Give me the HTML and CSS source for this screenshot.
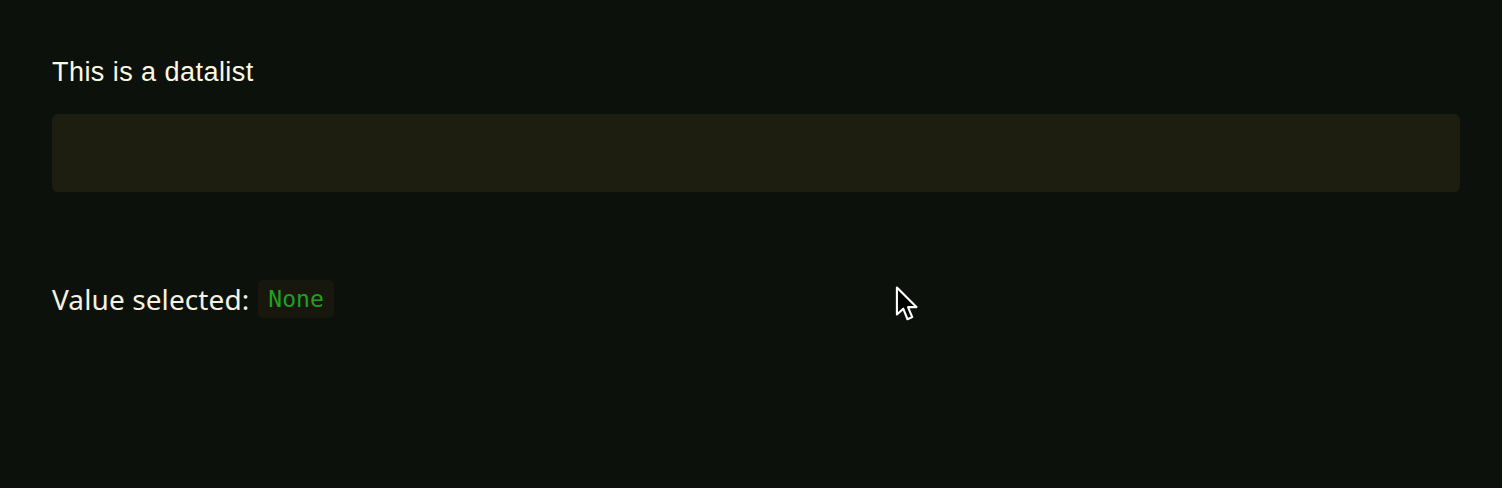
FILE: index.html
```html
<!DOCTYPE html>
<html>
<head>
<meta charset="utf-8">
<link rel="stylesheet" href="styles.css">
</head>
<body>
<main class="page">
  <label class="label" for="dl">This is a datalist</label>
  <input class="field" id="dl" list="opts">
  <datalist id="opts"></datalist>
  <p class="result">Value selected: <code class="code">None</code></p>
</main>
<svg class="cursor" width="26" height="38" viewBox="0 0 24 36">
  <path d="M1.5 1.5 L1.5 27 L7.5 21.5 L11.5 31.5 L16 29.5 L12 20 L20 20 Z" fill="#000" stroke="#fff" stroke-width="2" stroke-linejoin="round"/>
</svg>
</body>
</html>
```
FILE: styles.css
```css
html, body {
  margin: 0;
  padding: 0;
  background: #0c110c;
  height: 100%;
}
.page {
  padding: 56px 42px 0 52px;
  display: flex;
  flex-direction: column;
}
.label {
  font-family: "Liberation Sans", Arial, sans-serif;
  font-size: 27px;
  letter-spacing: 0.45px;
  line-height: 32px;
  color: #fdf8e0;
}
.field {
  margin-top: 26px;
  height: 78px;
  box-sizing: border-box;
  border: none;
  border-radius: 6px;
  background: #1e1e10;
  outline: none;
}
.result {
  margin: 88px 0 0 0;
  font-family: "Noto Sans", sans-serif;
  font-size: 28px;
  letter-spacing: 0.1px;
  line-height: 38px;
  color: #f6f1e0;
  display: flex;
  align-items: center;
  gap: 9px;
}
.code {
  font-family: "DejaVu Sans Mono", monospace;
  font-size: 23px;
  letter-spacing: 0;
  color: #20a020;
  background: #17170e;
  border-radius: 5px;
  padding: 5px 10px;
  line-height: 28px;
}
.cursor {
  position: absolute;
  left: 895px;
  top: 286px;
}
```
